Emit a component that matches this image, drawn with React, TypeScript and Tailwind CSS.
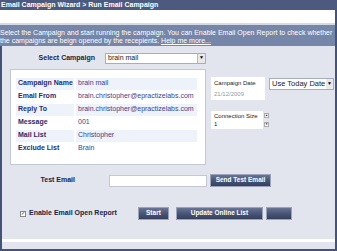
export default function App() {
  const font = { fontFamily: '"Liberation Sans", Arial, sans-serif' }

  const rows = [
    { label: 'Campaign Name', value: 'brain mail', shade: true },
    { label: 'Email From', value: 'brain.christopher@epractizelabs.com', shade: false },
    { label: 'Reply To', value: 'brain.christopher@epractizelabs.com', shade: true },
    { label: 'Message', value: '001', shade: false },
    { label: 'Mail List', value: 'Christopher', shade: true },
    { label: 'Exclude List', value: 'Brain', shade: false },
  ]

  const btn =
    'border border-[#9aa3b8] bg-gradient-to-b from-[#6a7595] via-[#4a5577] to-[#353f5e] text-white font-bold text-[6.5px] leading-none flex items-center justify-center'

  return (
    <div className="w-[337px] h-[251px] overflow-hidden flex flex-col bg-[#e2e5ee]" style={font}>
      {/* Title */}
      <div className="h-[10px] bg-[#4b5a7e] text-white font-bold text-[7px] leading-[10px] pl-[1px] whitespace-nowrap">
        Email Campaign Wizard &gt; Run Email Campaign
      </div>

      <div className="flex-1 flex flex-col border-r-2 border-[#44537a]">
        <div className="h-[13px] bg-white"></div>
        <div className="h-[2px] bg-[#d6dae6]"></div>

        {/* Description */}
        <div className="h-[21px] bg-[#7686a8] text-white text-[7px] leading-[8px] pt-[4px] whitespace-nowrap overflow-hidden">
          <div>Select the Campaign and start running the campaign. You can Enable Email Open Report to check whether</div>
          <div>
            the campaigns are beign opened by the recepients. <span className="underline">Help me more...</span>
          </div>
        </div>

        {/* Main panel */}
        <div className="flex-1 flex flex-col border-l-2 border-b-2 border-[#44537a]">
          <div className="flex items-center h-[14px] mt-[5px]">
            <div className="w-[93px] text-right font-bold text-[7px] text-[#1c2340]">Select Campaign</div>
            <div className="ml-[10px] w-[101px] h-[11px] bg-white border border-[#a6adc0] flex items-center justify-between pl-[2px]">
              <span className="text-[7px] text-[#222]">brain mail</span>
              <span className="w-[8px] h-[9px] bg-[#e9e9e9] border-l border-[#bbb] flex items-center justify-center text-[5px] text-black">▼</span>
            </div>
          </div>

          <div className="flex mt-[4px]">
            {/* Details box */}
            <div className="ml-[8px] w-[196px] h-[96px] bg-white border border-[#c4c8d4] pt-[7px] pl-[5px] pr-[8px]">
              {rows.map((r) => (
                <div key={r.label} className="flex h-[13px] items-center gap-[2px]">
                  <div className={`w-[58px] h-[12px] pl-[2px] flex items-center font-bold text-[7px] text-[#262d6e] whitespace-nowrap ${r.shade ? 'bg-[#eef2fa]' : ''}`}>
                    {r.label}
                  </div>
                  <div className={`flex-1 h-[12px] pl-[2px] flex items-center text-[7px] text-[#3c3f8c] whitespace-nowrap ${r.shade ? 'bg-[#eef2fa]' : ''}`}>
                    {r.value}
                  </div>
                </div>
              ))}
            </div>

            {/* Right column */}
            <div className="ml-[5px] flex flex-col">
              <div className="flex items-start mt-[8px]">
                <div className="w-[54px] h-[23px] bg-white px-[3px] pt-[2px]">
                  <div className="text-[6px] text-[#222] leading-[8px] whitespace-nowrap">Campaign Date</div>
                  <div className="text-[6px] text-[#999] leading-[8px] mt-[3px]">21/12/2009</div>
                </div>
                <div className="ml-[4px] mt-[1px] w-[65px] h-[12px] bg-white border border-[#a6adc0] flex items-center justify-between pl-[2px]">
                  <span className="text-[7.5px] text-[#222] whitespace-nowrap">Use Today Date</span>
                  <span className="w-[7px] h-[10px] bg-[#e9e9e9] flex items-center justify-center text-[5px] text-black">▼</span>
                </div>
              </div>

              <div className="flex items-start mt-[11px]">
                <div className="w-[52px] h-[18px] bg-white px-[3px] pt-[2px]">
                  <div className="text-[6px] text-[#222] leading-[7px] whitespace-nowrap">Connection Size</div>
                  <div className="text-[6px] text-[#222] leading-[7px] mt-[1px]">1</div>
                </div>
                <div className="ml-[1px] mt-[2px] flex flex-col gap-[4px]">
                  <span className="w-[5px] h-[5px] bg-white border border-[#aaa] text-[3px] flex items-center justify-center">▲</span>
                  <span className="w-[5px] h-[5px] bg-white border border-[#aaa] text-[3px] flex items-center justify-center">▼</span>
                </div>
              </div>
            </div>
          </div>

          {/* Test email */}
          <div className="flex items-center mt-[9px] h-[13px]">
            <div className="w-[73px] text-right font-bold text-[7px] text-[#1c2340]">Test Email</div>
            <div className="ml-[34px] w-[98px] h-[12px] bg-white border border-[#c4c8d4]"></div>
            <div className={`${btn} ml-[3px] w-[61px] h-[13px]`}>Send Test Email</div>
          </div>

          {/* Actions */}
          <div className="flex items-center mt-[20px] h-[13px]">
            <div className="ml-[18px] flex items-center gap-[3px]">
              <span className="w-[6px] h-[6px] bg-white border border-[#888] text-[5px] leading-none flex items-center justify-center text-[#222]">✓</span>
              <span className="font-bold text-[7px] text-[#1c2340] whitespace-nowrap">Enable Email Open Report</span>
            </div>
            <div className={`${btn} ml-[21px] w-[31px] h-[13px]`}>Start</div>
            <div className={`${btn} ml-[7px] w-[87px] h-[13px]`}>Update Online List</div>
            <div className={`${btn} ml-[3px] w-[26px] h-[13px]`}></div>
          </div>

          <div className="mt-auto mb-[7px] h-[3px] bg-white"></div>
        </div>
      </div>
    </div>
  )
}
